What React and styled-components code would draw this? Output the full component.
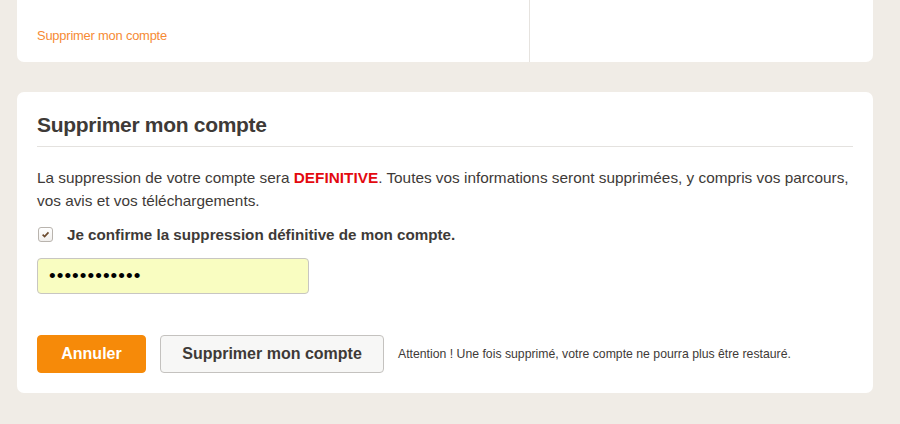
import React from "react";
import styled, { createGlobalStyle } from "styled-components";

const GlobalStyle = createGlobalStyle`
  body {
    margin: 0;
    background: #f0ece6;
    font-family: "Liberation Sans", Arial, sans-serif;
    color: #3e3a37;
  }
`;

const Page = styled.div`
  padding: 0 27px 0 17px;
  display: flex;
  flex-direction: column;
  gap: 30px;
`;

const TopCard = styled.div`
  background: #fff;
  border-radius: 0 0 7px 7px;
  height: 62px;
  display: grid;
  grid-template-columns: 513px 1fr;
`;

const TopCell = styled.div`
  border-right: ${(p) => (p.divider ? "1px solid #e6e3df" : "none")};
  padding: 26px 20px 0;
`;

const OrangeLink = styled.a`
  color: #f68a34;
  font-size: 12.9px;
  text-decoration: none;
  letter-spacing: -0.2px;
`;

const Card = styled.div`
  background: #fff;
  border-radius: 7px;
  padding: 21px 20px 20px;
`;

const Title = styled.h2`
  margin: 0;
  font-size: 21px;
  font-weight: bold;
  letter-spacing: -0.3px;
  color: #3e3a37;
  padding-bottom: 9px;
  border-bottom: 1px solid #e4e2df;
`;

const Text = styled.p`
  margin: 19px 0 0;
  font-size: 15.35px;
  line-height: 23px;
  color: #3e3a37;
`;

const Danger = styled.strong`
  color: #e3090f;
`;

const CheckRow = styled.label`
  display: flex;
  align-items: center;
  gap: 14px;
  margin-top: 14px;
  font-size: 15.2px;
  font-weight: bold;
  padding-left: 1px;
`;

const Box = styled.span`
  width: 13px;
  height: 13px;
  border: 1px solid #b9b4ae;
  border-radius: 3px;
  background: linear-gradient(#fff, #f1efed);
  display: flex;
  align-items: center;
  justify-content: center;
`;

const Input = styled.input`
  display: block;
  margin-top: 15px;
  width: 272px;
  height: 36px;
  box-sizing: border-box;
  background: #f9fdc1;
  border: 1px solid #c8c6c2;
  border-radius: 4px;
  padding: 0 11px;
  font-family: "Liberation Sans", Arial, sans-serif;
  font-size: 19px;
  letter-spacing: 1.05px;
  color: #000;
  outline: none;
`;

const Actions = styled.div`
  display: flex;
  align-items: center;
  gap: 14px;
  margin-top: 41px;
`;

const Button = styled.button`
  height: 38px;
  box-sizing: border-box;
  border-radius: 4px;
  font-family: inherit;
  font-size: 16px;
  font-weight: bold;
  padding: 0;
  background: ${(p) => (p.primary ? "#f68a09" : "#f7f7f6")};
  color: ${(p) => (p.primary ? "#fff" : "#3e3a37")};
  border: 1px solid ${(p) => (p.primary ? "#f68a09" : "#c4c2bf")};
  width: ${(p) => (p.primary ? "109px" : "224px")};
`;

const Note = styled.span`
  font-size: 12.25px;
  color: #3e3a37;
`;

export default function App() {
  return (
    <>
      <GlobalStyle />
      <Page>
        <TopCard>
          <TopCell divider>
            <OrangeLink href="#">Supprimer mon compte</OrangeLink>
          </TopCell>
          <TopCell />
        </TopCard>
        <Card>
          <Title>Supprimer mon compte</Title>
          <Text>
            La suppression de votre compte sera <Danger>DEFINITIVE</Danger>. Toutes vos
            informations seront supprimées, y compris vos parcours, vos avis et vos
            téléchargements.
          </Text>
          <CheckRow>
            <Box>
              <svg width="9" height="9" viewBox="0 0 10 10">
                <path d="M1.8 5.2 L4 7.4 L8.3 2.6" fill="none" stroke="#6b4a2e" strokeWidth="1.8" />
              </svg>
            </Box>
            Je confirme la suppression définitive de mon compte.
          </CheckRow>
          <Input type="password" defaultValue="motdepasse12" />
          <Actions>
            <Button primary>Annuler</Button>
            <Button>Supprimer mon compte</Button>
            <Note>Attention ! Une fois supprimé, votre compte ne pourra plus être restauré.</Note>
          </Actions>
        </Card>
      </Page>
    </>
  );
}
